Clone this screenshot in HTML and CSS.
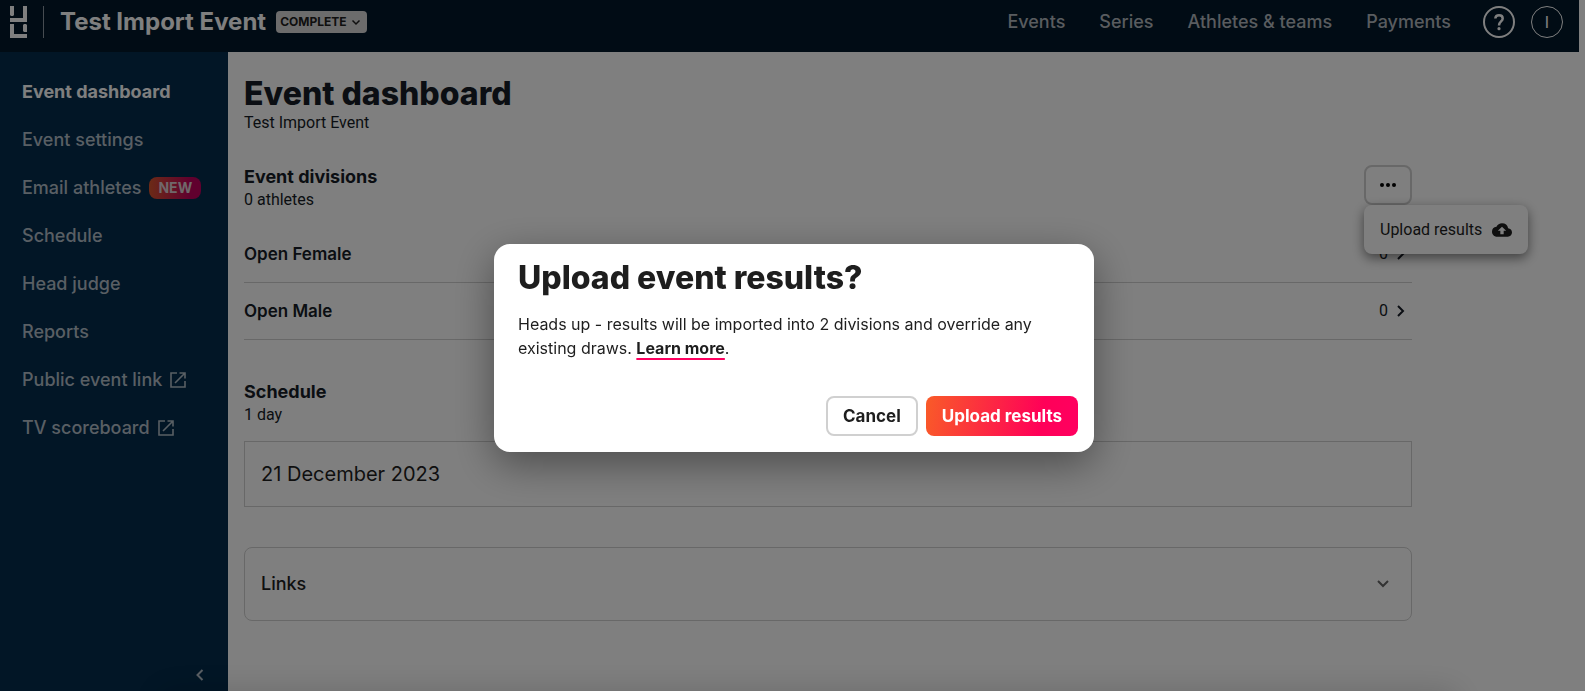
FILE: index.html
```html
<!DOCTYPE html>
<html lang="en">
<head>
  <meta charset="utf-8">
  <title>Test Import Event - Event dashboard</title>
  <link rel="stylesheet" href="styles.css">
</head>
<body>

  <header class="topbar">
    <a class="logo" href="#" aria-label="Home">
      <svg width="17" height="32" viewBox="0 0 17 32">
        <path fill="currentColor" d="M0 0h4v9l-1 1H1L0 9zM13 0h4v16H0v-4h13zM0 18h4v10h13v4H0zM14 18h2l1 1v7h-3l-1-1v-6z"/>
      </svg>
    </a>
    <div class="event-name">
      <strong>Test Import Event</strong>
      <button class="status" type="button">COMPLETE
        <svg width="10" height="10" viewBox="0 0 10 10"><path fill="none" stroke="currentColor" stroke-width="1.5" d="M1.5 3.5 5 7l3.500-3.500"/></svg>
      </button>
    </div>
    <nav class="topnav">
      <a href="#">Events</a>
      <a href="#">Series</a>
      <a href="#">Athletes &amp; teams</a>
      <a href="#">Payments</a>
    </nav>
    <button class="round help" type="button" aria-label="Help">
      <svg width="10" height="18" viewBox="0 0 10 18"><path fill="none" stroke="currentColor" stroke-width="2.500" d="M1.300 5.500C1.500 3.300 3 2.200 5 2.200s3.700 1.200 3.700 3.200C8.700 8.500 5 8.500 5 12.500"/><circle cx="5" cy="15.700" r="1.600" fill="currentColor"/></svg>
    </button>
    <button class="round" type="button">I</button>
  </header>

  <div class="layout">
    <aside class="sidebar">
      <nav class="sidenav">
        <a class="active" href="#">Event dashboard</a>
        <a href="#">Event settings</a>
        <a href="#">Email athletes <span class="badge">NEW</span></a>
        <a href="#">Schedule</a>
        <a href="#">Head judge</a>
        <a href="#">Reports</a>
        <a href="#">Public event link
          <svg width="16" height="16" viewBox="0 0 16 16"><path fill="none" stroke="currentColor" stroke-width="1.600" d="M7 1H1v14h14V9M9.500 1H15v5.500M15 1 5 11"/></svg>
        </a>
        <a href="#">TV scoreboard
          <svg width="16" height="16" viewBox="0 0 16 16"><path fill="none" stroke="currentColor" stroke-width="1.600" d="M7 1H1v14h14V9M9.500 1H15v5.500M15 1 5 11"/></svg>
        </a>
      </nav>
      <button class="collapse" type="button" aria-label="Collapse menu">
        <svg width="8" height="12" viewBox="0 0 8 12"><path fill="none" stroke="currentColor" stroke-width="2" d="M6.500 1 1.500 6l5 5"/></svg>
      </button>
    </aside>

    <main class="content">
      <h1>Event dashboard</h1>
      <p class="sub">Test Import Event</p>

      <section class="divisions">
        <div class="section-head">
          <div>
            <h2>Event divisions</h2>
            <p class="sub">0 athletes</p>
          </div>
          <div class="menu-wrap">
            <button class="more" type="button" aria-label="More actions">
              <svg width="16" height="4" viewBox="0 0 16 4"><circle cx="2" cy="2" r="2"/><circle cx="8" cy="2" r="2"/><circle cx="14" cy="2" r="2"/></svg>
            </button>
            <div class="menu">
              <button class="menu-item" type="button">Upload results
                <svg width="20" height="14" viewBox="0 4 24 16"><path fill="currentColor" d="M19.350 10.040A7.490 7.490 0 0 0 12 4C9.110 4 6.600 5.640 5.350 8.040A5.994 5.994 0 0 0 0 14c0 3.310 2.690 6 6 6h13c2.760 0 5-2.240 5-5 0-2.640-2.050-4.780-4.650-4.960zM14 13v4h-4v-4H7l5-5 5 5h-3z"/></svg>
              </button>
            </div>
          </div>
        </div>
        <ul class="rows">
          <li><a href="#"><b>Open Female</b><span>0</span>
            <svg width="8" height="12" viewBox="0 0 8 12"><path fill="none" stroke="currentColor" stroke-width="2" d="M1 1l5 5-5 5"/></svg></a></li>
          <li><a href="#"><b>Open Male</b><span>0</span>
            <svg width="8" height="12" viewBox="0 0 8 12"><path fill="none" stroke="currentColor" stroke-width="2" d="M1 1l5 5-5 5"/></svg></a></li>
        </ul>
      </section>

      <section class="schedule">
        <h2>Schedule</h2>
        <p class="sub">1 day</p>
        <a class="day" href="#">21 December 2023</a>
      </section>

      <button class="links" type="button">Links
        <svg width="14" height="8" viewBox="0 0 14 8"><path fill="none" stroke="#666" stroke-width="2" d="M2 1l5 5 5-5"/></svg>
      </button>
    </main>
  </div>

  <div class="bottom-shadow"></div>

  <div class="overlay">
    <div class="dialog" role="dialog" aria-modal="true" aria-labelledby="dialog-title">
      <h2 id="dialog-title">Upload event results?</h2>
      <p>Heads up - results will be imported into 2 divisions and override any existing draws. <a href="#">Learn more</a>.</p>
      <div class="actions">
        <button class="btn" type="button">Cancel</button>
        <button class="btn primary" type="button">Upload results</button>
      </div>
    </div>
  </div>

</body>
</html>
```
FILE: styles.css
```css
* {
  box-sizing: border-box;
}
body {
  margin: 0;
  min-height: 100vh;
  display: flex;
  flex-direction: column;
  background: #fff;
  color: #161c26;
  font: 16px/24px Roboto, sans-serif;
}
h1, h2, p, ul {
  margin: 0;
  padding: 0;
}
a {
  color: inherit;
  text-decoration: none;
}
button {
  font: inherit;
  color: inherit;
  cursor: pointer;
}
svg {
  flex: none;
}

/* top bar */
.topbar {
  display: flex;
  align-items: center;
  height: 52px;
  margin-right: 6px;
  padding: 0 16px 8px 10px;
  background: #02182a;
  color: #fff;
  font-family: Inter, sans-serif;
}
.logo {
  display: flex;
  padding-right: 16px;
  border-right: 1px solid #8d98a3;
}
.event-name {
  display: flex;
  align-items: center;
  flex: 1;
  gap: 10px;
  padding-left: 16px;
  font-size: 24px;
}
.status {
  display: flex;
  align-items: center;
  gap: 4px;
  height: 22px;
  padding: 0 6px 0 4px;
  border: 0;
  border-radius: 4px;
  background: #d8d8d8;
  color: #1e1e1e;
  font-size: 12px;
  font-weight: 700;
}
.topnav {
  display: flex;
  gap: 34px;
  margin-right: 32px;
  color: #b3b9bf;
  font-size: 18px;
  font-weight: 500;
}
.round {
  display: flex;
  align-items: center;
  justify-content: center;
  width: 32px;
  height: 32px;
  padding: 0;
  border: 1px solid #fff;
  border-radius: 50%;
  background: none;
  font-size: 16px;
}
.help {
  margin-right: 16px;
  border-width: 2px;
}

/* sidebar */
.layout {
  display: flex;
  flex: 1;
}
.sidebar {
  display: flex;
  flex-direction: column;
  justify-content: space-between;
  width: 228px;
  padding: 16px 22px 8px;
  background: #042c4c;
  color: #b3bec8;
  font: 500 18px/24px Inter, sans-serif;
}
.sidenav a {
  display: flex;
  align-items: center;
  gap: 8px;
  height: 48px;
  white-space: nowrap;
}
.sidenav .active {
  color: #fff;
  font-weight: 700;
}
.badge {
  padding: 0 9px;
  border-radius: 8px;
  background: linear-gradient(90deg, #d8552e, #c0005c 80%);
  color: #e0d0d4;
  font-size: 14px;
  font-weight: 700;
  line-height: 22px;
}
.collapse {
  align-self: flex-end;
  display: flex;
  padding: 2px;
  border: 0;
  background: none;
}

/* page content */
.content {
  flex: 1;
  max-width: 1200px;
  padding: 24px 16px;
}
h1 {
  font: 800 32px/36px Inter, sans-serif;
}
.content h2 {
  font: 700 18px/24px Inter, sans-serif;
}
.sub {
  line-height: 22px;
}
.section-head {
  display: flex;
  align-items: flex-start;
  justify-content: space-between;
  margin-top: 31px;
}
.menu-wrap {
  position: relative;
}
.more {
  display: flex;
  align-items: center;
  justify-content: center;
  width: 48px;
  height: 40px;
  border: 2px solid #d0d0d0;
  border-radius: 8px;
  background: #fff;
}
.menu {
  position: absolute;
  top: 100%;
  left: 0;
  border-radius: 8px;
  background: #fff;
  box-shadow: 0 4px 12px rgba(0, 0, 0, .5);
}
.menu-item {
  display: flex;
  align-items: center;
  gap: 10px;
  height: 49px;
  padding: 0 16px;
  border: 0;
  background: none;
  color: #1e1e1e;
  white-space: nowrap;
}
.rows {
  margin-top: 15px;
  list-style: none;
}
.rows a {
  display: flex;
  align-items: center;
  height: 57px;
  padding-right: 7px;
  border-bottom: 1px solid #d0d0d0;
}
.rows b {
  flex: 1;
  font: 600 17px/24px Inter, sans-serif;
}
.rows span {
  margin-right: 9px;
}
.schedule {
  margin-top: 40px;
}
.day {
  display: block;
  margin-top: 15px;
  padding: 16px;
  border: 1px solid #d0d0d0;
  color: #1e1e1e;
  font: 20px/32px Inter, sans-serif;
}
.links {
  display: flex;
  align-items: center;
  justify-content: space-between;
  width: 100%;
  height: 74px;
  margin-top: 40px;
  padding: 0 21px 0 16px;
  border: 1px solid #d0d0d0;
  border-radius: 8px;
  background: none;
  color: #1e1e1e;
  font: 500 18px/24px Inter, sans-serif;
}
.bottom-shadow {
  position: fixed;
  top: 100%;
  left: 160px;
  right: 128px;
  height: 40px;
  box-shadow: 0 0 32px rgba(0, 0, 0, .16);
}

/* dialog */
.overlay {
  position: fixed;
  inset: 0;
  display: flex;
  align-items: center;
  justify-content: center;
  padding: 5px 0 0 3px;
  background: rgba(0, 0, 0, .5);
}
.dialog {
  width: 600px;
  padding: 16px;
  border-radius: 16px;
  background: #fff;
  box-shadow: 0 12px 40px rgba(0, 0, 0, .4);
  color: #1e1e1e;
}
.dialog h2 {
  padding: 0 8px;
  font: 800 32px/36px Inter, sans-serif;
}
.dialog p {
  padding: 16px 8px 0;
  font-family: Inter, sans-serif;
}
.dialog p a {
  font-weight: 700;
  text-decoration: underline 2px #ff0060;
  text-decoration-skip-ink: none;
  text-underline-offset: 4px;
}
.actions {
  display: flex;
  justify-content: flex-end;
  gap: 8px;
  margin-top: 36px;
}
.btn {
  height: 40px;
  padding: 0 15px;
  border: 2px solid #d0d0d0;
  border-radius: 8px;
  background: #fff;
  font: 700 17px/24px Inter, sans-serif;
}
.primary {
  border: 0;
  padding: 0 16px;
  background: linear-gradient(100deg, #f95b28, #ff0058 75%, #ff0060);
  color: #fff;
}
```
